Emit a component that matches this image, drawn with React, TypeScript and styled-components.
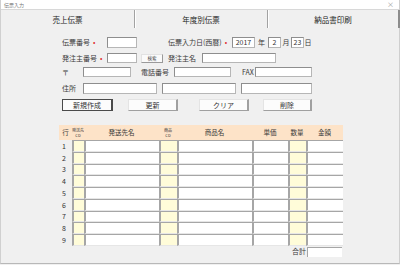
import React from "react";
import styled, { createGlobalStyle } from "styled-components";

const GlobalStyle = createGlobalStyle`
  html, body { margin: 0; padding: 0; background: #f0f0f0; }
  * { box-sizing: border-box; }
`;

const FONT = `"Noto Sans CJK JP", "Noto Sans", sans-serif`;

const Window = styled.div`
  width: 400px;
  height: 264px;
  display: flex;
  flex-direction: column;
  background: #f0f0f0;
  border-left: 1px solid #d0d0d0;
  border-right: 1px solid #cfcfcf;
  border-bottom: 1px solid #b8b8b8;
  font-family: ${FONT};
  color: #333;
`;

const TitleBar = styled.div`
  height: 10px;
  flex: none;
  display: flex;
  align-items: center;
  justify-content: space-between;
  padding: 0 5px 0 3px;
  background: #ffffff;
  border-bottom: 1px solid #d8d8d8;
  font-size: 5px;
  color: #777;
`;

const Close = styled.span`
  font-size: 7px;
  color: #999;
  line-height: 1;
`;

const TabBar = styled.div`
  height: 18px;
  flex: none;
  display: grid;
  grid-template-columns: 133px 133px 1fr;
  border-right: 2px solid #8c8c8c;
  margin-right: -1px;
`;

const Tab = styled.div<{ $divider?: boolean }>`
  display: flex;
  align-items: center;
  justify-content: center;
  font-size: 7.5px;
  color: #222;
  border-left: ${(p) => (p.$divider ? "1px solid #a2a2a2" : "none")};
  box-shadow: ${(p) => (p.$divider ? "inset 1px 0 0 #ffffff" : "none")};
`;

const Content = styled.div`
  flex: 1;
  display: flex;
  flex-direction: column;
  padding: 9px 0 0 58px;
`;

const Row = styled.div<{ $h: number; $mt?: number }>`
  display: flex;
  align-items: center;
  height: ${(p) => p.$h}px;
  margin-top: ${(p) => p.$mt ?? 0}px;
  margin-left: 3px;
`;

const Label = styled.div<{ $w: number; $ml?: number; $pl?: number }>`
  width: ${(p) => p.$w}px;
  margin-left: ${(p) => p.$ml ?? 0}px;
  padding-left: ${(p) => p.$pl ?? 0}px;
  flex: none;
  font-size: 7px;
  line-height: 1;
  color: #3a3a3a;
  white-space: nowrap;
  display: flex;
  align-items: center;
`;

const UnitLabel = styled(Label)`
  justify-content: center;
`;

const Mark = styled.span`
  color: #e03030;
  margin-left: 3px;
  font-size: 7px;
`;

const Field = styled.div<{ $w: number; $ml?: number }>`
  width: ${(p) => p.$w}px;
  margin-left: ${(p) => p.$ml ?? 0}px;
  height: 100%;
  flex: none;
  background: #ffffff;
  border: 1px solid #b6b6b6;
  border-top-color: #8e8e8e;
  border-left-color: #8e8e8e;
  font-size: 7px;
  line-height: 1;
  display: flex;
  align-items: center;
  justify-content: center;
  color: #333;
`;

const SmallButton = styled.div`
  width: 22px;
  height: 9px;
  margin-left: 4px;
  flex: none;
  background: #fafafa;
  border: 1px solid #e2e2e2;
  border-right: 1px solid #9a9a9a;
  border-bottom: 1px solid #9a9a9a;
  font-size: 4.5px;
  display: flex;
  align-items: center;
  justify-content: center;
  color: #444;
`;

const Button = styled.div<{ $w: number; $ml?: number; $default?: boolean }>`
  width: ${(p) => p.$w}px;
  margin-left: ${(p) => p.$ml ?? 0}px;
  height: 100%;
  flex: none;
  background: #fcfcfc;
  border: 1px solid ${(p) => (p.$default ? "#4a4a4a" : "#e4e4e4")};
  border-right: ${(p) => (p.$default ? "2px solid #4a4a4a" : "2px solid #a0a0a0")};
  border-bottom: 1px solid ${(p) => (p.$default ? "#4a4a4a" : "#a0a0a0")};
  font-size: 7px;
  line-height: 1;
  display: flex;
  align-items: center;
  justify-content: center;
  color: #333;
`;

const Table = styled.div`
  margin-top: 14px;
  width: 284px;
  display: grid;
  grid-template-columns: 13px 12px 75px 18px 75px 36px 18px 37px;
  grid-template-rows: 15px repeat(9, 11.75px);
`;

const HeadCell = styled.div<{ $tiny?: boolean }>`
  background: #fde3c8;
  display: flex;
  flex-direction: column;
  align-items: center;
  justify-content: center;
  font-size: ${(p) => (p.$tiny ? "4px" : "6.5px")};
  line-height: ${(p) => (p.$tiny ? "5px" : "1")};
  color: #3a3a3a;
  white-space: nowrap;
`;

const RowNo = styled.div`
  display: flex;
  align-items: center;
  justify-content: flex-end;
  padding-right: 6px;
  font-size: 7px;
  color: #333;
`;

const Cell = styled.div<{ $tint?: boolean }>`
  background: ${(p) => (p.$tint ? "#fffcd9" : "#ffffff")};
  border-top: 1px solid #a6a6a6;
  border-left: 2px solid #a6a6a6;
  border-bottom: 1px solid #e6e6e6;
`;

const TotalRow = styled.div`
  width: 284px;
  height: 10px;
  margin-top: 1px;
  display: flex;
  justify-content: flex-end;
  align-items: center;
`;

const TotalLabel = styled.div`
  font-size: 7px;
  line-height: 1;
  color: #3a3a3a;
  margin-right: 1px;
`;

const TotalField = styled.div`
  width: 35px;
  height: 100%;
  margin-right: 1px;
  background: #ffffff;
  border-top: 1px solid #a6a6a6;
  border-left: 1px solid #a6a6a6;
`;

const tints = [true, false, true, false, false, true, false];

export default function App() {
  const rows = [1, 2, 3, 4, 5, 6, 7, 8, 9];
  return (
    <>
      <GlobalStyle />
      <Window>
        <TitleBar>
          <span>伝票入力</span>
          <Close>×</Close>
        </TitleBar>
        <TabBar>
          <Tab>売上伝票</Tab>
          <Tab $divider>年度別伝票</Tab>
          <Tab $divider>納品書印刷</Tab>
        </TabBar>
        <Content>
          <Row $h={11}>
            <Label $w={45}>
              伝票番号<Mark>•</Mark>
            </Label>
            <Field $w={30} />
            <Label $w={64} $ml={31}>
              伝票入力日(西暦)<Mark>•</Mark>
            </Label>
            <Field $w={23}>2017</Field>
            <UnitLabel $w={13}>年</UnitLabel>
            <Field $w={13}>2</Field>
            <UnitLabel $w={10}>月</UnitLabel>
            <Field $w={13}>23</Field>
            <UnitLabel $w={8}>日</UnitLabel>
          </Row>
          <Row $h={10} $mt={5}>
            <Label $w={45}>
              発注主番号<Mark>•</Mark>
            </Label>
            <Field $w={30} />
            <SmallButton>検索</SmallButton>
            <Label $w={34} $ml={5}>
              発注主名
            </Label>
            <Field $w={74} />
          </Row>
          <Row $h={10} $mt={4}>
            <Label $w={21}>〒</Label>
            <Field $w={48} />
            <Label $w={33} $ml={10}>
              電話番号
            </Label>
            <Field $w={57} />
            <Label $w={24} $pl={11}>
              FAX
            </Label>
            <Field $w={57} />
          </Row>
          <Row $h={11} $mt={6}>
            <Label $w={21}>住所</Label>
            <Field $w={74} />
            <Field $w={74} $ml={5} />
            <Field $w={71} $ml={5} />
          </Row>
          <Row $h={12} $mt={5}>
            <Button $w={51} $default>
              新規作成
            </Button>
            <Button $w={50} $ml={15}>
              更新
            </Button>
            <Button $w={50} $ml={21}>
              クリア
            </Button>
            <Button $w={49} $ml={14}>
              削除
            </Button>
          </Row>
          <Table>
            <HeadCell>行</HeadCell>
            <HeadCell $tiny>
              <span>発送先</span>
              <span>CD</span>
            </HeadCell>
            <HeadCell>発送先名</HeadCell>
            <HeadCell $tiny>
              <span>商品</span>
              <span>CD</span>
            </HeadCell>
            <HeadCell>商品名</HeadCell>
            <HeadCell>単価</HeadCell>
            <HeadCell>数量</HeadCell>
            <HeadCell>金額</HeadCell>
            {rows.map((n) => (
              <React.Fragment key={n}>
                <RowNo>{n}</RowNo>
                {tints.map((t, i) => (
                  <Cell key={i} $tint={t} />
                ))}
              </React.Fragment>
            ))}
          </Table>
          <TotalRow>
            <TotalLabel>合計</TotalLabel>
            <TotalField />
          </TotalRow>
        </Content>
      </Window>
    </>
  );
}
